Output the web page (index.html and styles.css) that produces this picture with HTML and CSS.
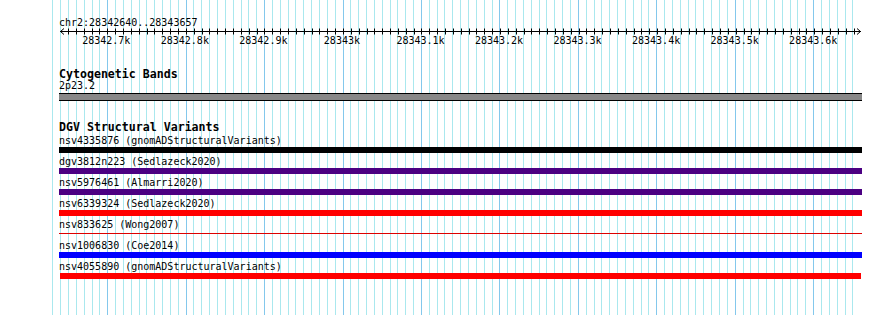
FILE: index.html
```html
<!DOCTYPE html>
<html lang="en">
<head>
    <meta charset="UTF-8">
    <meta name="viewport" content="width=device-width, initial-scale=1.0">
    <link rel="stylesheet" href="styles.css">
    <title>Genome View</title>
</head>
<body>
    <div class="view">
        <div class="gridlines" id="gridlines"></div>
        <div class="tracks">
            <div class="ruler">
                <div class="loc">chr2:28342640..28343657</div>
                <svg class="axis" id="axis" width="803" height="7">
                    <line x1="1" y1="3.5" x2="802" y2="3.5" stroke="#000"/>
                    <polyline points="5,0.5 1.5,3.5 5,6.5" fill="none" stroke="#000"/>
                    <polyline points="798,0.5 801.5,3.5 798,6.5" fill="none" stroke="#000"/>
                </svg>
                <div class="tick-labels">
                    <span>28342.7k</span>
                    <span>28342.8k</span>
                    <span>28342.9k</span>
                    <span>28343k</span>
                    <span>28343.1k</span>
                    <span>28343.2k</span>
                    <span>28343.3k</span>
                    <span>28343.4k</span>
                    <span>28343.5k</span>
                    <span>28343.6k</span>
                </div>
            </div>

            <div class="track cyto">
                <h2 class="track-label">Cytogenetic Bands</h2>
                <div class="feature-label">2p23.2</div>
                <div class="band"></div>
            </div>

            <div class="track dgv">
                <h2 class="track-label">DGV Structural Variants</h2>
                <div class="features">
                    <div class="feature-label">nsv4335876 (gnomADStructuralVariants)</div>
                    <div class="bar black"></div>
                    <div class="feature-label">dgv3812n223 (Sedlazeck2020)</div>
                    <div class="bar indigo"></div>
                    <div class="feature-label">nsv5976461 (Almarri2020)</div>
                    <div class="bar indigo"></div>
                    <div class="feature-label">nsv6339324 (Sedlazeck2020)</div>
                    <div class="bar red"></div>
                    <div class="feature-label">nsv833625 (Wong2007)</div>
                    <div class="bar thin"></div>
                    <div class="feature-label">nsv1006830 (Coe2014)</div>
                    <div class="bar blue"></div>
                    <div class="feature-label">nsv4055890 (gnomADStructuralVariants)</div>
                    <div class="bar red short"></div>
                </div>
            </div>
        </div>
    </div>

    <script src="script.js"></script>
</body>
</html>
```

FILE: styles.css
```css
/* reset */
* {
    margin: 0;
    padding: 0;
    box-sizing: border-box;
}

body {
    font-family: "DejaVu Sans Mono", monospace;
    font-size: 10px;
    color: #000;
    background: #fff;
}

/* view: grid lines and tracks share one cell */
.view {
    display: grid;
    width: 890px;
    height: 315px;
    overflow: hidden;
}

.gridlines,
.tracks {
    grid-area: 1 / 1;
}

.gridlines {
    display: flex;
    padding-left: 52.3px;
}

.gl {
    flex: 0 0 7.855px;
    border-left: 1px solid #aae8ee;
}

.gl.major {
    border-left-color: #84c8ec;
}

.tracks {
    width: 862px;
    padding-left: 59px;
}

/* ruler */
.ruler {
    padding-top: 18px;
}

.loc {
    line-height: 10px;
}

.axis {
    display: block;
}

.tick-labels {
    display: flex;
    margin-left: 8px;
    line-height: 12px;
}

.tick-labels span {
    flex: 0 0 78.55px;
    text-align: center;
}

/* tracks */
.track-label {
    font-size: 11.6px;
    font-weight: bold;
    line-height: 13px;
}

.cyto {
    margin-top: 21px;
}

.cyto .feature-label {
    line-height: 10px;
}

.band {
    height: 8px;
    margin-top: 2px;
    background: #888;
    border-top: 1px solid #000;
    border-bottom: 1px solid #000;
}

.dgv {
    margin-top: 20px;
}

.features {
    padding-top: 1px;
}

.feature-label {
    line-height: 12px;
    white-space: nowrap;
}

.bar {
    height: 6px;
    margin-bottom: 3px;
}

.bar.black { background: #000; }
.bar.indigo { background: #4b0082; }
.bar.red { background: #f00; }
.bar.blue { background: #00f; }

.bar.thin {
    background: linear-gradient(#d00, #d00) 0 2px / 100% 1px no-repeat;
}

.bar.short {
    margin-left: 1px;
    margin-right: 1px;
}
```

FILE: script.js
```js
// grid lines every 10bp, darker every 100bp
const grid = document.getElementById('gridlines');
for (let bp = 28342630; bp <= 28343650; bp += 10) {
    const line = document.createElement('div');
    line.className = bp % 100 === 0 ? 'gl major' : 'gl';
    grid.appendChild(line);
}

// ruler ticks, lined up with the grid
const axis = document.getElementById('axis');
for (let j = 2; j <= 102; j++) {
    const x = Math.round(52.3 + j * 7.855) - 59 + 0.5;
    const tick = document.createElementNS('http://www.w3.org/2000/svg', 'line');
    tick.setAttribute('x1', x);
    tick.setAttribute('x2', x);
    tick.setAttribute('y1', 0.5);
    tick.setAttribute('y2', 6.5);
    tick.setAttribute('stroke', '#000');
    axis.appendChild(tick);
}
```
